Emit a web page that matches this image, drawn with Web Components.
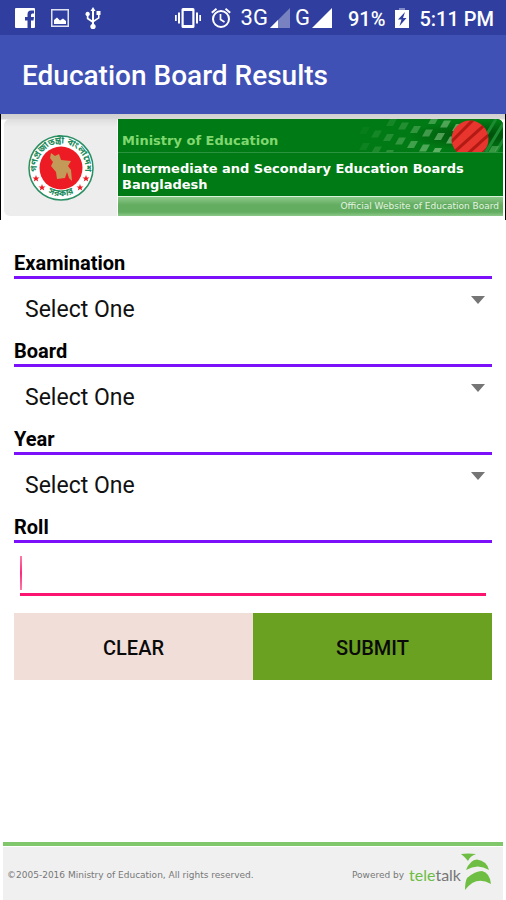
<!DOCTYPE html>
<html lang="en">
<head>
<meta charset="utf-8">
<meta name="viewport" content="width=device-width, initial-scale=1">
<title>Education Board Results</title>
<style>
    body {
        margin: 0;
        background: #fff;
        font-family: Roboto, "Liberation Sans", sans-serif;
    }
</style>
</head>
<body>
<results-app></results-app>

<script>
class StatusBar extends HTMLElement {
    constructor() {
        super();
        this.attachShadow({ mode: 'open' });
    }

    connectedCallback() {
        this.shadowRoot.innerHTML = `
            <style>
                :host {
                    display: flex;
                    justify-content: space-between;
                    align-items: center;
                    height: 35px;
                    padding: 0 12px 0 15px;
                    background: #303f9f;
                    color: #fff;
                    font-size: 20px;
                    font-weight: 500;
                    white-space: nowrap;
                }
                div { display: flex; align-items: center; }
                svg { display: block; fill: #fff; }
                .notices { gap: 16px; }
                .system { gap: 16px; }
                .group { gap: 10px; }
                .group > span { padding-top: 2px; }
                .sims { gap: 5px; }
                .sim { gap: 2px; }
                .net { font-size: 22px; font-weight: 400; }
            </style>
            <div class="notices">
                <svg width="20" height="20" viewBox="0 0 20 20"><path d="M1 0H19Q20 0 20 1V19Q20 20 19 20H16V12.500H18.500L19 9H16V7Q16 5.500 17.500 5.500H19V2.500H16Q12.500 2.500 12.500 6.500V9H10V12.500H12.500V20H1Q0 20 0 19V1Q0 0 1 0Z"/></svg>
                <svg width="18" height="18" viewBox="0 0 18 18"><path fill-rule="evenodd" d="M0 0H18V18H0ZM1.500 1.500V16.500H16.500V1.500Z" opacity=".85"/><path d="M3 15V11L6 8.500L9 11.500L12 9.500L15 12V15Z"/></svg>
                <svg width="16" height="22" viewBox="0 0 16 22"><path d="M8 0L10.500 4H9V13L13 10.500V8H11.500V4H15.500V8H14.500V11.300L9 15V17A2.700 2.700 0 1 1 7 17V15.500L1.800 12V9A2.200 2.200 0 1 1 3.500 9V11L7 13.300V4H5.500Z"/></svg>
            </div>
            <div class="system">
                <div class="group">
                    <svg width="26" height="20" viewBox="0 0 26 20"><path fill-rule="evenodd" d="M8 0H18Q19.500 0 19.500 1.500V18.500Q19.500 20 18 20H8Q6.500 20 6.500 18.500V1.500Q6.500 0 8 0ZM8.700 3V17H17.300V3Z"/><path d="M0 7H1.700V13H0ZM3 4.500H5V15.500H3ZM21 4.500H23V15.500H21ZM24.300 7H26V13H24.300Z"/></svg>
                    <svg width="20" height="20" viewBox="0 0 20 20"><g fill="none" stroke="#fff"><circle cx="10" cy="11" r="8" stroke-width="2"/><path d="M9.500 6V11.500L13.500 14" stroke-width="1.700"/><path d="M.8 4.700L5.500 .8M14.500 .8L19.200 4.700" stroke-width="2"/></g></svg>
                    <div class="sims">
                        <div class="sim"><span class="net">3G</span><svg width="20" height="20" viewBox="0 0 20 20"><path d="M20 0V20H0Z" opacity=".35"/><path d="M8 12V20H0Z"/></svg></div>
                        <div class="sim"><span class="net">G</span><svg width="20" height="20" viewBox="0 0 20 20"><path d="M20 0V20H0Z"/></svg></div>
                    </div>
                </div>
                <div class="group">
                    <span>91%</span>
                    <svg width="14" height="20" viewBox="0 0 14 20"><path d="M4 0H10V2H4Z" opacity=".4"/><path d="M0 2H14V20H0Z"/><path d="M10 4L3 11.500H6.500L4.500 18L11.500 10H8Z" fill="#303f9f"/></svg>
                    <span>5:11 PM</span>
                </div>
            </div>
        `;
    }
}

class AppBar extends HTMLElement {
    constructor() {
        super();
        this.attachShadow({ mode: 'open' });
    }

    connectedCallback() {
        this.shadowRoot.innerHTML = `
            <style>
                :host { display: block; padding: 3px 22px 0; background: #3f51b5; color: #fff; }
                h1 { margin: 0; font-size: 28px; font-weight: 500; line-height: 76px; }
            </style>
            <h1><slot></slot></h1>
        `;
    }
}

class BoardSeal extends HTMLElement {
    constructor() {
        super();
        this.attachShadow({ mode: 'open' });
    }

    connectedCallback() {
        this.shadowRoot.innerHTML = `
            <style>
                :host { display: block; }
                svg { display: block; }
                text { font: 700 9px "Noto Sans Bengali", "Noto Sans", sans-serif; fill: #1c8a5c; }
            </style>
            <svg width="66" height="66" viewBox="0 0 66 66">
                <circle cx="33" cy="33" r="32" fill="#fff" stroke="#2b8f64" stroke-width="1.500"/>
                <circle cx="33" cy="33" r="21.500" fill="#ed1c24"/>
                <path fill="#c49a58" d="M23 18L27 21L31 19L33 25L43 26L40 31L43 35L44 46L41 43L39 37L37 43L29 44L28 37L23 31L25 27L22 23Z"/>
                <path id="top" d="M11.300 43.500A24.200 24.200 0 1 1 54.700 43.500" fill="none"/>
                <path id="low" d="M15 54.500A28 28 0 0 0 51 54.500" fill="none"/>
                <text text-anchor="middle"><textPath href="#top" startOffset="50%">গণপ্রজাতন্ত্রী বাংলাদেশ</textPath></text>
                <text text-anchor="middle"><textPath href="#low" startOffset="50%">সরকার</textPath></text>
                <g fill="#ed1c24">
                    <path id="star" d="M8 40L8.900 42.400L11.500 42.500L9.500 44.100L10.200 46.500L8 45.100L5.800 46.500L6.500 44.100L4.500 42.500L7.100 42.400Z"/>
                    <use href="#star" x="6" y="9"/><use href="#star" x="50"/><use href="#star" x="44" y="9"/>
                </g>
            </svg>
        `;
    }
}

class BoardBanner extends HTMLElement {
    constructor() {
        super();
        this.attachShadow({ mode: 'open' });
    }

    // One slanted row of the woven pattern behind the disc
    row(x, y, count, opacity) {
        let cells = '';
        for (let i = 0; i < count; i++) {
            cells += `<path d="M${x + i * 12} ${y + i * 3.5}h7l-4 7h-7z" opacity="${opacity + i * 0.08}"/>`;
        }
        return cells;
    }

    connectedCallback() {
        this.shadowRoot.innerHTML = `
            <style>
                :host {
                    display: flex;
                    gap: 1px;
                    padding: 5px 2px 4px 3px;
                    border: solid #000;
                    border-width: 0 1px;
                    background: linear-gradient(#cfcfcf, #d8d8d8 5px, #fff 6px);
                }
                .logo {
                    flex: 0 0 113px;
                    display: flex;
                    align-items: center;
                    justify-content: center;
                    border-radius: 6px 0 0 6px;
                    background: linear-gradient(#dedede, #ededed 8px);
                }
                .text {
                    flex: 1;
                    min-width: 0;
                    border-top-right-radius: 6px;
                    overflow: hidden;
                    background: #007a14;
                    color: #fff;
                    font-family: "DejaVu Sans", sans-serif;
                }
                .ministry {
                    position: relative;
                    height: 33px;
                    border-bottom: 1px solid #2b9340;
                }
                .ministry svg { position: absolute; top: 0; right: 0; }
                h2, h3 { position: relative; margin: 0; padding-left: 4px; font-weight: 700; font-size: 13px; }
                h2 { color: #80d870; line-height: 44px; }
                h3 { padding-top: 8px; padding-bottom: 3px; line-height: 16px; }
                p {
                    margin: 0;
                    padding-right: 4px;
                    border-top: 1px solid #d9f0d9;
                    background: linear-gradient(#8cc98a, #63ad60 8px, #63ad60 15px, #8cc98a);
                    color: #e4f4e2;
                    font-size: 9px;
                    line-height: 19px;
                    text-align: right;
                }
            </style>
            <div class="logo"><board-seal></board-seal></div>
            <div class="text">
                <div class="ministry">
                    <svg width="155" height="33" viewBox="0 0 155 33">
                        <defs>
                            <radialGradient id="glow" cx=".85" cy=".5" r=".45"><stop stop-color="#004a0a"/><stop offset="1" stop-color="#007a14"/></radialGradient>
                            <clipPath id="disc"><circle cx="122" cy="20" r="18.500"/></clipPath>
                        </defs>
                        <rect width="155" height="33" fill="url(#glow)"/>
                        <path d="M128 33L148 0M138 33L158 0M148 33L165 5" stroke="#1c8a30" stroke-width="3"/>
                        <g fill="#b5e3ae">
                            ${this.row(84, -2, 3, 0.35)}
                            ${this.row(42, 0, 6, 0.12)}
                            ${this.row(15, 8, 7, 0.04)}
                            ${this.row(15, 24, 3, 0.08)}
                            ${this.row(144, 27, 1, 0.3)}
                        </g>
                        <circle cx="122" cy="20" r="18.500" fill="#e8362f"/>
                        <g clip-path="url(#disc)" stroke="#a0120c" stroke-width="3" opacity=".75"><path d="M102 24L127 -1M104 35L141 2M116 38L146 11M128 40L148 22"/></g>
                    </svg>
                    <h2>Ministry of Education</h2>
                </div>
                <h3>Intermediate and Secondary Education Boards Bangladesh</h3>
                <p>Official Website of Education Board</p>
            </div>
        `;
    }
}

class FormField extends HTMLElement {
    constructor() {
        super();
        this.attachShadow({ mode: 'open' });
    }

    connectedCallback() {
        const control = this.getAttribute('type') === 'text'
            ? '<input id="control" type="text" inputmode="numeric">'
            : `<div class="pick">
                    <select id="control"><option>Select One</option></select>
                    <svg width="14" height="8" viewBox="0 0 14 8"><path d="M0 0H14L7 8Z" fill="#757575"/></svg>
                </div>`;

        this.shadowRoot.innerHTML = `
            <style>
                :host { display: block; color: #000; }
                label {
                    display: block;
                    border-bottom: 3px solid #7c10fa;
                    font-size: 20px;
                    font-weight: 700;
                    line-height: 25px;
                }
                .pick { position: relative; }
                .pick svg { position: absolute; top: 17px; right: 7px; pointer-events: none; }
                select, input {
                    display: block;
                    box-sizing: border-box;
                    border: 0;
                    border-radius: 0;
                    outline: 0;
                    background: transparent;
                    color: #111;
                    font: 400 23px Roboto, "Liberation Sans", sans-serif;
                }
                select { width: 100%; height: 60px; padding: 0 32px 0 11px; appearance: none; }
                input {
                    width: calc(100% - 12px);
                    height: 53px;
                    margin: 0 6px;
                    padding: 12px 4px 4px;
                    border-bottom: 3px solid #fb1470;
                    background: linear-gradient(#ff7aa8, #ff2a7c 50%, #ff7aa8) 0 13px / 2px 34px no-repeat;
                }
            </style>
            <label for="control">${this.getAttribute('label')}</label>
            ${control}
        `;
    }
}

class FormActions extends HTMLElement {
    constructor() {
        super();
        this.attachShadow({ mode: 'open' });
    }

    connectedCallback() {
        this.shadowRoot.innerHTML = `
            <style>
                :host { display: flex; margin-top: 17px; }
                button {
                    flex: 1;
                    height: 67px;
                    padding: 2px 0 0;
                    border: 0;
                    background: #f2ded9;
                    color: #0a0a0a;
                    font: 500 20px Roboto, "Liberation Sans", sans-serif;
                }
                .submit { background: #6aa121; }
            </style>
            <button type="button">CLEAR</button>
            <button type="button" class="submit">SUBMIT</button>
        `;
    }
}

class PageFooter extends HTMLElement {
    constructor() {
        super();
        this.attachShadow({ mode: 'open' });
    }

    connectedCallback() {
        this.shadowRoot.innerHTML = `
            <style>
                :host {
                    display: block;
                    margin: 0 3px;
                    border-top: 4px solid #80c76c;
                    color: #777;
                    font: 9px "DejaVu Sans", sans-serif;
                }
                footer {
                    display: flex;
                    justify-content: space-between;
                    align-items: center;
                    height: 53px;
                    margin-top: 1px;
                    padding: 0 12px 0 4px;
                    background: #f0f0f0;
                }
                span { padding-top: 2px; }
                div { display: flex; align-items: center; gap: 5px; }
                .brand { gap: 0; font: 16px Lato, "Open Sans", sans-serif; }
                .brand svg { margin-bottom: 4px; }
                b { font-weight: 400; color: #6cbd45; }
            </style>
            <footer>
                <span>©2005-2016 Ministry of Education, All rights reserved.</span>
                <div>
                    <span>Powered by</span>
                    <div class="brand">
                        <span><b>tele</b>talk</span>
                        <svg width="30" height="38" viewBox="0 0 30 38" fill="#6fbe44"><path d="M0 1Q7 0 15 1Q9 3 7 8Q4 4 0 1Z"/><path d="M5 17Q9 7 16 6.500Q26 8 28 17Q17 10 5 17Z"/><path d="M4 37Q4 29 6 25Q14 18 21 18Q29 20 30 31Q15 22 4 37Z"/></svg>
                    </div>
                </div>
            </footer>
        `;
    }
}

class ResultsApp extends HTMLElement {
    constructor() {
        super();
        this.attachShadow({ mode: 'open' });
    }

    connectedCallback() {
        this.shadowRoot.innerHTML = `
            <style>
                :host { display: flex; flex-direction: column; min-height: 100vh; }
                form { padding: 31px 14px 24px; }
                page-footer { margin-top: auto; }
            </style>
            <status-bar></status-bar>
            <app-bar>Education Board Results</app-bar>
            <board-banner></board-banner>
            <form>
                <form-field label="Examination"></form-field>
                <form-field label="Board"></form-field>
                <form-field label="Year"></form-field>
                <form-field label="Roll" type="text"></form-field>
                <form-actions></form-actions>
            </form>
            <page-footer></page-footer>
        `;
    }
}

customElements.define('status-bar', StatusBar);
customElements.define('app-bar', AppBar);
customElements.define('board-seal', BoardSeal);
customElements.define('board-banner', BoardBanner);
customElements.define('form-field', FormField);
customElements.define('form-actions', FormActions);
customElements.define('page-footer', PageFooter);
customElements.define('results-app', ResultsApp);
</script>
</body>
</html>
